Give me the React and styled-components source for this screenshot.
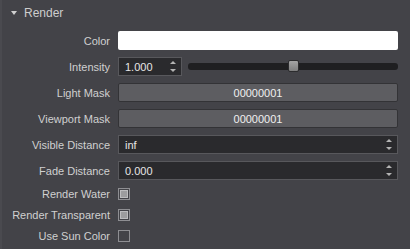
import React from "react";
import styled, { createGlobalStyle } from "styled-components";

const Global = createGlobalStyle`
  html, body { margin: 0; padding: 0; background: #434348; }
  body { font-family: "Liberation Sans", Arial, sans-serif; font-size: 11px; color: #cfcfcf; }
`;

const Panel = styled.div`
  width: 410px;
  height: 249px;
  box-sizing: border-box;
  border-left: 2px solid #4a4a4f;
  display: flex;
  flex-direction: column;
`;

const Header = styled.div`
  height: 26px;
  display: flex;
  align-items: center;
  padding-left: 9px;
  gap: 7px;
  font-size: 12px;
  color: #cdcdcd;
  box-sizing: border-box;
  padding-bottom: 1px;
`;

const Caret = styled.span`
  width: 0;
  height: 0;
  border-left: 3.5px solid transparent;
  border-right: 3.5px solid transparent;
  border-top: 4px solid #d0d0d0;
`;

const Grid = styled.div`
  display: grid;
  grid-template-columns: 108px 1fr;
  column-gap: 8px;
  row-gap: 7px;
  padding: 5px 12px 0 0;
  align-items: center;
`;

const Label = styled.div`
  text-align: right;
  white-space: nowrap;
  color: #d0d0d0;
`;

const ColorSwatch = styled.div`
  height: 19px;
  background: #ffffff;
  border-radius: 2px;
  box-sizing: border-box;
`;

const InlineRow = styled.div`
  display: flex;
  align-items: center;
  gap: 6px;
`;

const SpinBox = styled.div`
  height: 19px;
  width: ${(p) => p.$width || "auto"};
  flex: ${(p) => (p.$width ? "none" : "1")};
  box-sizing: border-box;
  background: #2a2a2d;
  border: 1px solid #58585c;
  display: flex;
  align-items: center;
  padding: 0 5px 0 6px;
  color: #e6e6e6;
`;

const SpinText = styled.span`
  flex: 1;
`;

const Arrows = styled.div`
  display: flex;
  flex-direction: column;
  gap: 5px;
`;

const Up = styled.span`
  width: 0;
  height: 0;
  border-left: 3px solid transparent;
  border-right: 3px solid transparent;
  border-bottom: 3px solid #b4b4b4;
`;

const Down = styled.span`
  width: 0;
  height: 0;
  border-left: 3px solid transparent;
  border-right: 3px solid transparent;
  border-top: 3px solid #b4b4b4;
`;

const Slider = styled.div`
  flex: 1;
  height: 19px;
  position: relative;
  display: flex;
  align-items: center;
`;

const Track = styled.div`
  flex: 1;
  height: 7px;
  background: #1f1f21;
  border-radius: 3px;
`;

const Thumb = styled.div`
  position: absolute;
  top: 3px;
  width: 11px;
  height: 12px;
  box-sizing: border-box;
  border: 1px solid #2c2c2e;
  border-radius: 2px;
  background: linear-gradient(#a4a4a4, #7e7e7e);
`;

const MaskButton = styled.div`
  height: 19px;
  box-sizing: border-box;
  background: #5d5d61;
  border: 1px solid #333336;
  border-radius: 2px;
  display: flex;
  align-items: center;
  justify-content: center;
  color: #f0f0f0;
`;

const Check = styled.div`
  width: 12px;
  height: 12px;
  box-sizing: border-box;
  border: 1px solid #8e8e92;
  display: flex;
  align-items: center;
  justify-content: center;
`;

const CheckMark = styled.div`
  width: 6px;
  height: 6px;
  background: #9c9c9e;
  border: 1px solid #bcbcbe;
`;

const CheckRow = styled.div`
  height: 14px;
  display: flex;
  align-items: center;
`;

function Spin({ value, width }) {
  return (
    <SpinBox $width={width}>
      <SpinText>{value}</SpinText>
      <Arrows>
        <Up />
        <Down />
      </Arrows>
    </SpinBox>
  );
}

function CheckBox({ checked }) {
  return (
    <CheckRow>
      <Check>{checked && <CheckMark />}</Check>
    </CheckRow>
  );
}

export default function App() {
  const sliderPos = 0.5;
  return (
    <>
      <Global />
      <Panel>
        <Header>
          <Caret />
          <span>Render</span>
        </Header>
        <Grid>
          <Label>Color</Label>
          <ColorSwatch />

          <Label>Intensity</Label>
          <InlineRow>
            <Spin value="1.000" width="64px" />
            <Slider>
              <Track />
              <Thumb style={{ left: `calc(${sliderPos * 100}% - 5px)` }} />
            </Slider>
          </InlineRow>

          <Label>Light Mask</Label>
          <MaskButton>00000001</MaskButton>

          <Label>Viewport Mask</Label>
          <MaskButton>00000001</MaskButton>

          <Label>Visible Distance</Label>
          <Spin value="inf" />

          <Label>Fade Distance</Label>
          <Spin value="0.000" />

          <Label>Render Water</Label>
          <CheckBox checked />

          <Label>Render Transparent</Label>
          <CheckBox checked />

          <Label>Use Sun Color</Label>
          <CheckBox />
        </Grid>
      </Panel>
    </>
  );
}
